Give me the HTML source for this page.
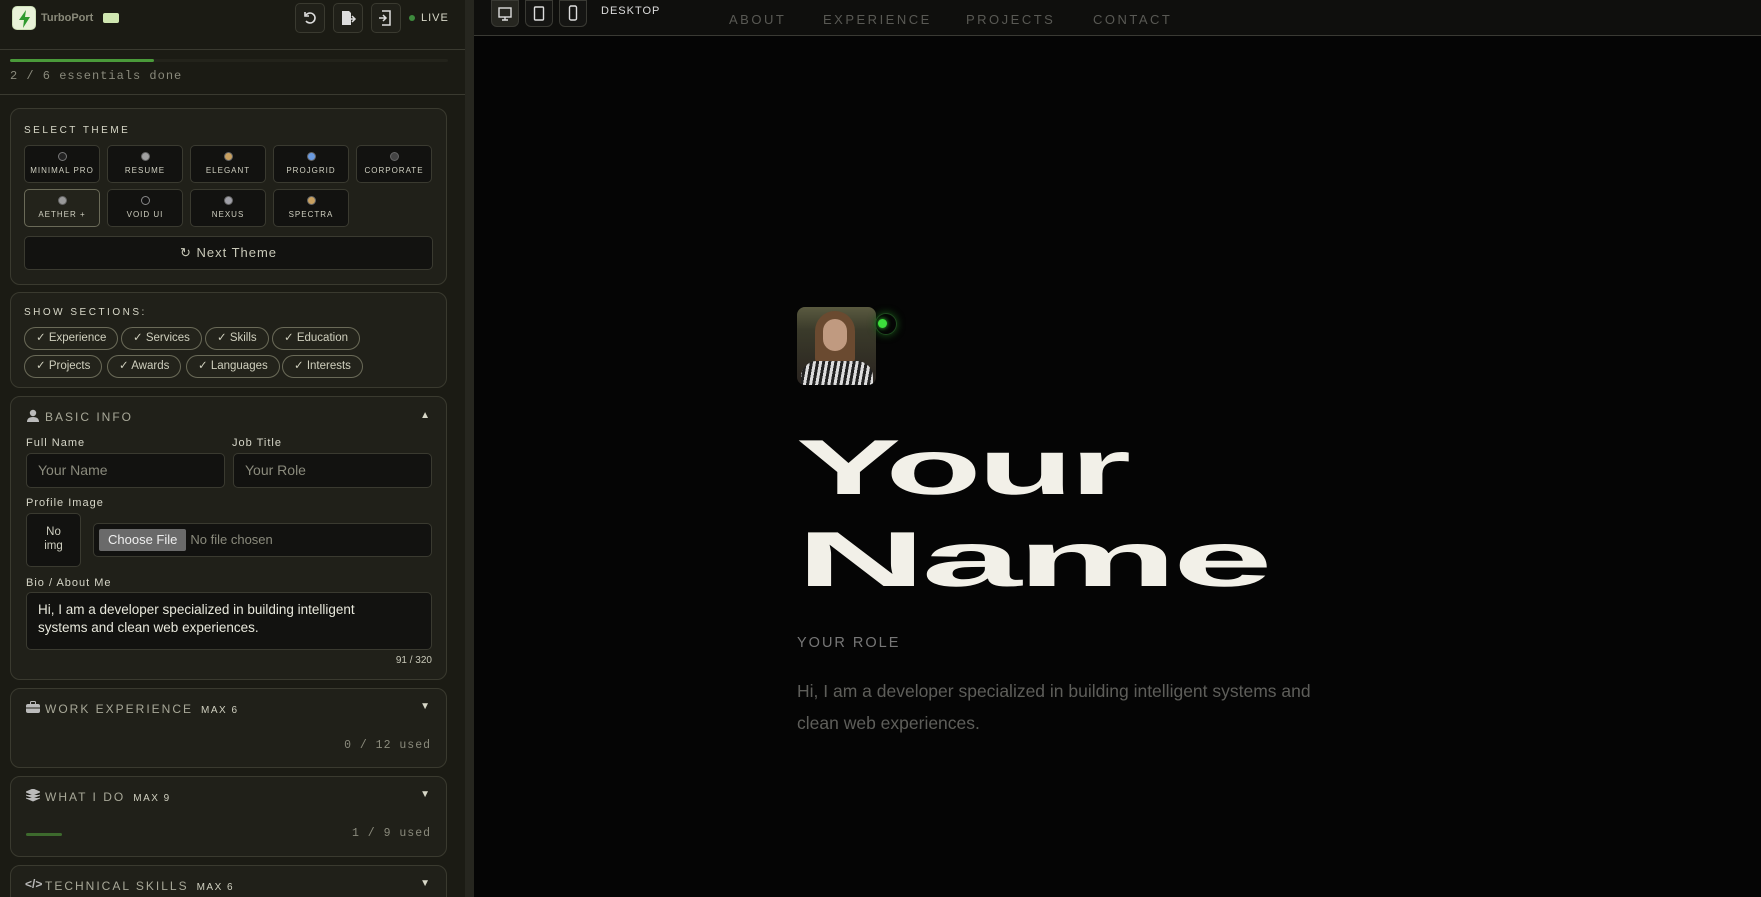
<!DOCTYPE html>
<html><head><meta charset="utf-8"><style>
*{box-sizing:border-box;margin:0;padding:0}
body{width:1761px;height:897px;overflow:hidden;background:#050505;font-family:"Liberation Sans",sans-serif;position:relative}
.abs{position:absolute}
#side{left:0;top:0;width:465px;height:897px;background:#1b1b14;overflow:hidden}
#scroll{left:465px;top:0;width:9px;height:897px;background:#26261f}
.card{position:absolute;left:10px;width:437px;background:#202019;border:1px solid #3a3a2f;border-radius:10px}
.mono{font-family:"Liberation Mono",monospace}
.lbl{color:#d8d8c8;font-size:10px;letter-spacing:2.5px}
.tb{position:absolute;width:76px;height:38px;background:#121210;border:1px solid #3a3a30;border-radius:5px;text-align:center;color:#cfcfc0;font-size:8px;letter-spacing:1px}
.tb i{display:block;width:9px;height:9px;border-radius:50%;margin:6px auto 5px;border:1px solid #666}
.chip{position:absolute;height:23px;border:1px solid #6a6a58;border-radius:12px;color:#cfcfbd;font-size:11.5px;line-height:21px;padding:0 11px;background:#23231b}
.inp{position:absolute;background:#121210;border:1px solid #3a3a30;border-radius:5px;color:#8a8a7c;font-size:14px;padding-left:11px}
.flab{position:absolute;color:#d6d6c8;font-size:11px;letter-spacing:1px}
.sh{position:absolute;left:34px;color:#a8a898;font-size:12px;letter-spacing:2px}
.sh b{font-weight:normal;color:#d0d0c0;font-size:10px;letter-spacing:1.5px;margin-left:8px}
.arr{position:absolute;right:16px;color:#d8d8c8;font-size:10px}
.hb{position:absolute;top:3px;width:30px;height:30px;border:1px solid #3a3a30;border-radius:5px;background:#202019}
.nav{position:absolute;top:12px;color:#595954;font-size:13px;letter-spacing:2.5px}
.db{position:absolute;top:0;width:28px;height:27px;border:1px solid #3a3a34;border-radius:0 0 6px 6px;background:#151513}
.db svg{margin:1px 0 0 3px}
</style></head><body>
<div id="side" class="abs">
 <div class="abs" style="left:12px;top:6px;width:24px;height:24px;background:#e8f2d8;border-radius:5px;border:1px solid #cde0b8"><svg width="24" height="24" viewBox="0 0 24 24"><path d="M13 3 L6 13 H11 L10 21 L17 10 H12 Z" fill="#2e9a2e"/></svg></div>
 <div class="abs" style="left:41px;top:12px;color:#8a8a7a;font-size:11px;font-weight:bold">TurboPort</div>
 <div class="abs" style="left:103px;top:13px;width:16px;height:10px;background:#cfe6b0;border-radius:2px"></div>
 <div class="hb" style="left:295px"><svg width="28" height="28" viewBox="0 0 28 28"><path d="M10 11 A5 5 0 1 1 10 17" stroke="#ddd" stroke-width="1.6" fill="none"/><path d="M9 8 V12 H13" stroke="#ddd" stroke-width="1.6" fill="none"/></svg></div>
 <div class="hb" style="left:333px"><svg width="28" height="28" viewBox="0 0 28 28"><path d="M8 7 H15 L17 9 V21 H8 Z" fill="#ddd"/><path d="M14 15 H21 M18 12 L21 15 L18 18" stroke="#ddd" stroke-width="1.5" fill="none"/></svg></div>
 <div class="hb" style="left:371px"><svg width="28" height="28" viewBox="0 0 28 28"><path d="M10 7 H18 V21 H10" stroke="#ddd" stroke-width="1.5" fill="none"/><path d="M7 14 H14 M11 11 L14 14 L11 17" stroke="#ddd" stroke-width="1.5" fill="none"/></svg></div>
 <div class="abs" style="left:409px;top:15px;width:6px;height:6px;border-radius:50%;background:#3d8a3d"></div>
 <div class="abs" style="left:421px;top:12px;color:#d8d8c8;font-size:11px;letter-spacing:1px">LIVE</div>
 <div class="abs" style="left:0;top:49px;width:465px;height:1px;background:#3a3a30"></div>
 <div class="abs" style="left:10px;top:59px;width:438px;height:3px;background:#23231b;border-radius:2px"></div>
 <div class="abs" style="left:10px;top:59px;width:144px;height:3px;background:#4a9a3a;border-radius:2px"></div>
 <div class="abs mono" style="left:10px;top:69px;color:#8a8a7c;font-size:12px;letter-spacing:1px">2 / 6 essentials done</div>
 <div class="abs" style="left:0;top:94px;width:465px;height:1px;background:#3a3a30"></div>

 <div class="card" style="top:108px;height:177px">
  <div class="abs lbl" style="left:13px;top:16px">SELECT THEME</div>
  <div class="tb" style="left:13px;top:36px"><i style="background:#222;border-color:#777"></i>MINIMAL PRO</div>
  <div class="tb" style="left:96px;top:36px"><i style="background:#a0a0a0"></i>RESUME</div>
  <div class="tb" style="left:179px;top:36px"><i style="background:#c8a060"></i>ELEGANT</div>
  <div class="tb" style="left:262px;top:36px"><i style="background:#6a9ae0"></i>PROJGRID</div>
  <div class="tb" style="left:345px;top:36px"><i style="background:#444"></i>CORPORATE</div>
  <div class="tb" style="left:13px;top:80px;background:#23231b;border-color:#6a6a58"><i style="background:#999"></i>AETHER +</div>
  <div class="tb" style="left:96px;top:80px"><i style="background:#111;border-color:#888"></i>VOID UI</div>
  <div class="tb" style="left:179px;top:80px"><i style="background:#a0a0a8"></i>NEXUS</div>
  <div class="tb" style="left:262px;top:80px"><i style="background:#c8a060"></i>SPECTRA</div>
  <div class="abs" style="left:13px;top:127px;width:409px;height:34px;background:#121210;border:1px solid #3a3a30;border-radius:5px;text-align:center;line-height:32px;color:#c8c8b8;font-size:13px;letter-spacing:1px">↻ Next Theme</div>
 </div>

 <div class="card" style="top:292px;height:96px">
  <div class="abs lbl" style="left:13px;top:14px">SHOW SECTIONS:</div>
  <div class="chip" style="left:13px;top:34px">✓ Experience</div>
  <div class="chip" style="left:110px;top:34px">✓ Services</div>
  <div class="chip" style="left:194px;top:34px">✓ Skills</div>
  <div class="chip" style="left:261px;top:34px">✓ Education</div>
  <div class="chip" style="left:13px;top:62px">✓ Projects</div>
  <div class="chip" style="left:96px;top:62px">✓ Awards</div>
  <div class="chip" style="left:175px;top:62px">✓ Languages</div>
  <div class="chip" style="left:271px;top:62px">✓ Interests</div>
 </div>

 <div class="card" style="top:396px;height:284px">
  <svg class="abs" style="left:15px;top:12px" width="14" height="14" viewBox="0 0 14 14"><circle cx="7" cy="4" r="3.2" fill="#bbb"/><path d="M1 13 Q1 8 7 8 Q13 8 13 13 Z" fill="#bbb"/></svg>
  <div class="sh" style="top:13px">BASIC INFO</div>
  <div class="arr" style="top:13px">▲</div>
  <div class="flab" style="left:15px;top:40px">Full Name</div>
  <div class="flab" style="left:221px;top:40px">Job Title</div>
  <div class="inp" style="left:15px;top:56px;width:199px;height:35px;line-height:33px">Your Name</div>
  <div class="inp" style="left:222px;top:56px;width:199px;height:35px;line-height:33px">Your Role</div>
  <div class="flab" style="left:15px;top:100px">Profile Image</div>
  <div class="abs" style="left:15px;top:116px;width:55px;height:54px;background:#121210;border:1px solid #3a3a30;border-radius:5px;color:#cfcfc0;font-size:11.5px;text-align:center;padding-top:11px;line-height:14px">No<br>img</div>
  <div class="inp" style="left:82px;top:126px;width:339px;height:34px;padding-left:5px;line-height:32px;font-size:13px"><span style="display:inline-block;background:#6a6a6a;color:#eee;padding:0 9px;line-height:22px;border-radius:2px;margin-right:4px">Choose File</span>No file chosen</div>
  <div class="flab" style="left:15px;top:180px">Bio / About Me</div>
  <div class="inp" style="left:15px;top:195px;width:406px;height:58px;color:#e8e8dc;font-size:13.5px;line-height:18px;padding-top:8px">Hi, I am a developer specialized in building intelligent<br>systems and clean web experiences.</div>
  <div class="abs" style="right:14px;top:258px;color:#c8c8b8;font-size:10px">91 / 320</div>
 </div>

 <div class="card" style="top:688px;height:80px">
  <svg class="abs" style="left:15px;top:12px" width="14" height="12" viewBox="0 0 14 12"><rect x="4.5" y="0.5" width="5" height="3" rx="1" fill="none" stroke="#bbb"/><rect x="0" y="3" width="14" height="9" rx="2" fill="#bbb"/><rect x="0" y="6.5" width="14" height="1" fill="#202019"/></svg>
  <div class="sh" style="top:13px">WORK EXPERIENCE<b>MAX 6</b></div>
  <div class="arr" style="top:12px">▼</div>
  <div class="abs mono" style="right:15px;top:50px;color:#8a8a7c;font-size:11.5px;letter-spacing:1px">0 / 12 used</div>
 </div>

 <div class="card" style="top:776px;height:81px">
  <svg class="abs" style="left:15px;top:12px" width="14" height="13" viewBox="0 0 14 13"><path d="M7 0 L14 3 L7 6 L0 3Z M0 6 L7 9 L14 6 M0 9 L7 12 L14 9" fill="#bbb" stroke="#bbb" stroke-width="1"/></svg>
  <div class="sh" style="top:13px">WHAT I DO<b>MAX 9</b></div>
  <div class="arr" style="top:12px">▼</div>
  <div class="abs" style="left:15px;top:56px;width:36px;height:3px;background:#3d6a2d;border-radius:2px"></div>
  <div class="abs mono" style="right:15px;top:50px;color:#8a8a7c;font-size:11.5px;letter-spacing:1px">1 / 9 used</div>
 </div>

 <div class="card" style="top:865px;height:60px">
  <div class="abs" style="left:14px;top:11px;color:#bbb;font-size:12px;font-weight:bold">&lt;/&gt;</div>
  <div class="sh" style="top:13px">TECHNICAL SKILLS<b>MAX 6</b></div>
  <div class="arr" style="top:12px">▼</div>
 </div>
</div>
<div id="scroll" class="abs"></div>

<div class="abs" style="left:474px;top:0;width:1287px;height:36px;background:#0f0f0d;border-bottom:1px solid #3a3a34"></div>
<div class="db" style="left:491px;background:#262620"><svg width="20" height="24" viewBox="0 0 20 24"><rect x="4" y="6" width="12" height="9" fill="none" stroke="#ddd" stroke-width="1.4"/><path d="M10 15 V18 M7 18 H13" stroke="#ddd" stroke-width="1.4"/></svg></div>
<div class="db" style="left:525px"><svg width="20" height="24" viewBox="0 0 20 24"><rect x="5.5" y="5" width="9" height="13" rx="1" fill="none" stroke="#ddd" stroke-width="1.4"/></svg></div>
<div class="db" style="left:559px"><svg width="20" height="24" viewBox="0 0 20 24"><rect x="6.5" y="4" width="7" height="14" rx="1.5" fill="none" stroke="#ddd" stroke-width="1.4"/></svg></div>
<div class="abs" style="left:601px;top:5px;color:#ddd;font-size:11px;letter-spacing:1px">DESKTOP</div>
<div class="nav" style="left:729px">ABOUT</div>
<div class="nav" style="left:823px">EXPERIENCE</div>
<div class="nav" style="left:966px">PROJECTS</div>
<div class="nav" style="left:1093px">CONTACT</div>

<div class="abs" style="left:797px;top:307px;width:79px;height:78px;border-radius:8px;overflow:hidden;background:linear-gradient(180deg,#5a5a40 0%,#3a3a2a 30%,#2a2420 100%)">
 <div class="abs" style="left:18px;top:4px;width:40px;height:55px;border-radius:20px 20px 8px 8px;background:#6a4a30"></div>
 <div class="abs" style="left:26px;top:12px;width:24px;height:32px;border-radius:12px;background:#c09a80"></div>
 <div class="abs" style="left:4px;top:54px;width:72px;height:30px;border-radius:16px 16px 0 0;background:repeating-linear-gradient(100deg,#ddd 0 3px,#222 3px 6px)"></div>
</div>
<div class="abs" style="left:875px;top:313px;width:22px;height:22px;border-radius:50%;box-shadow:0 0 8px #1a5a1a;border:1px solid #1f4a1f"></div>
<div class="abs" style="left:878px;top:319px;width:9px;height:9px;border-radius:50%;background:#3ce03c;box-shadow:0 0 5px #3ce03c"></div>

<div class="abs" style="left:796px;top:421px;color:#f2f0e8;font-size:78px;font-weight:bold;line-height:92px;letter-spacing:-2px">
 <div style="transform:scaleX(2.02);transform-origin:left;white-space:nowrap">Your</div>
 <div style="transform:scaleX(2.31);transform-origin:left;white-space:nowrap">Name</div>
</div>
<div class="abs" style="left:797px;top:635px;color:#777;font-size:14.5px;letter-spacing:2px">YOUR ROLE</div>
<div class="abs" style="left:797px;top:675px;color:#5e5e5a;font-size:17.5px;line-height:32px;width:560px">Hi, I am a developer specialized in building intelligent systems and clean web experiences.</div>
</body></html>
